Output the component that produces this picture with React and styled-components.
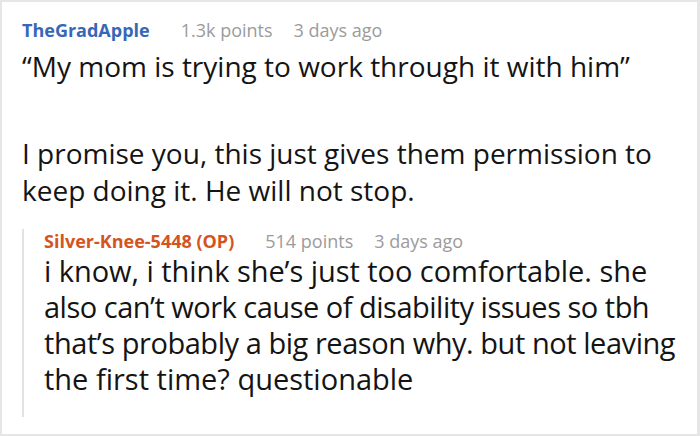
import styled, { createGlobalStyle } from "styled-components";

const GlobalStyle = createGlobalStyle`
  html, body {
    margin: 0;
    padding: 0;
    background: #ffffff;
  }
  body {
    font-family: "Open Sans", "Noto Sans", sans-serif;
  }
`;

const Frame = styled.div`
  box-sizing: border-box;
  width: 700px;
  height: 436px;
  overflow: hidden;
  border: 2px solid #e6e6e6;
  border-right-width: 3px;
  padding: 16px 12px 0 20px;
  background: #ffffff;
`;

const Meta = styled.div`
  display: flex;
  align-items: baseline;
  font-size: 18px;
  line-height: 24px;
  white-space: nowrap;
`;

const Author = styled.span`
  font-weight: 700;
  color: ${(p) => (p.$op ? "#d4541f" : "#3767b6")};
  margin-right: 31px;
`;

const Info = styled.span`
  color: #9b9b9b;
  margin-right: 21px;
`;

const Body = styled.div`
  margin-top: 6px;
  padding-right: 8px;
  color: #141414;
  font-size: 28px;
  line-height: 37px;
`;

const Para = styled.p`
  margin: 0;
  & + & {
    margin-top: 50px;
  }
`;

const Reply = styled.div`
  margin-top: 20px;
  border-left: 2px solid #e2e2e2;
  padding: 0 0 20px 20px;
`;

const ReplyBody = styled.div`
  color: #141414;
  font-size: 29px;
  font-stretch: 93%;
  line-height: 36px;
`;

const Line = styled.span`
  display: block;
  white-space: nowrap;
  letter-spacing: ${(p) => p.$ls || 0}px;
`;

const replyLines = [
  ["i know, i think she’s just too comfortable. she", -0.05],
  ["also can’t work cause of disability issues so tbh", -0.5],
  ["that’s probably a big reason why. but not leaving", -0.45],
  ["the first time? questionable", 0],
];

export default function App() {
  return (
    <>
      <GlobalStyle />
      <Frame>
        <Meta>
          <Author>TheGradApple</Author>
          <Info>1.3k points</Info>
          <Info>3 days ago</Info>
        </Meta>
        <Body>
          <Para>“My mom is trying to work through it with him”</Para>
          <Para>
            I promise you, this just gives them permission to keep doing it.
            He will not stop.
          </Para>
        </Body>
        <Reply>
          <Meta>
            <Author $op>Silver-Knee-5448 (OP)</Author>
            <Info>514 points</Info>
            <Info>3 days ago</Info>
          </Meta>
          <ReplyBody>
            {replyLines.map(([text, ls]) => (
              <Line key={text} $ls={ls}>
                {text}
              </Line>
            ))}
          </ReplyBody>
        </Reply>
      </Frame>
    </>
  );
}
